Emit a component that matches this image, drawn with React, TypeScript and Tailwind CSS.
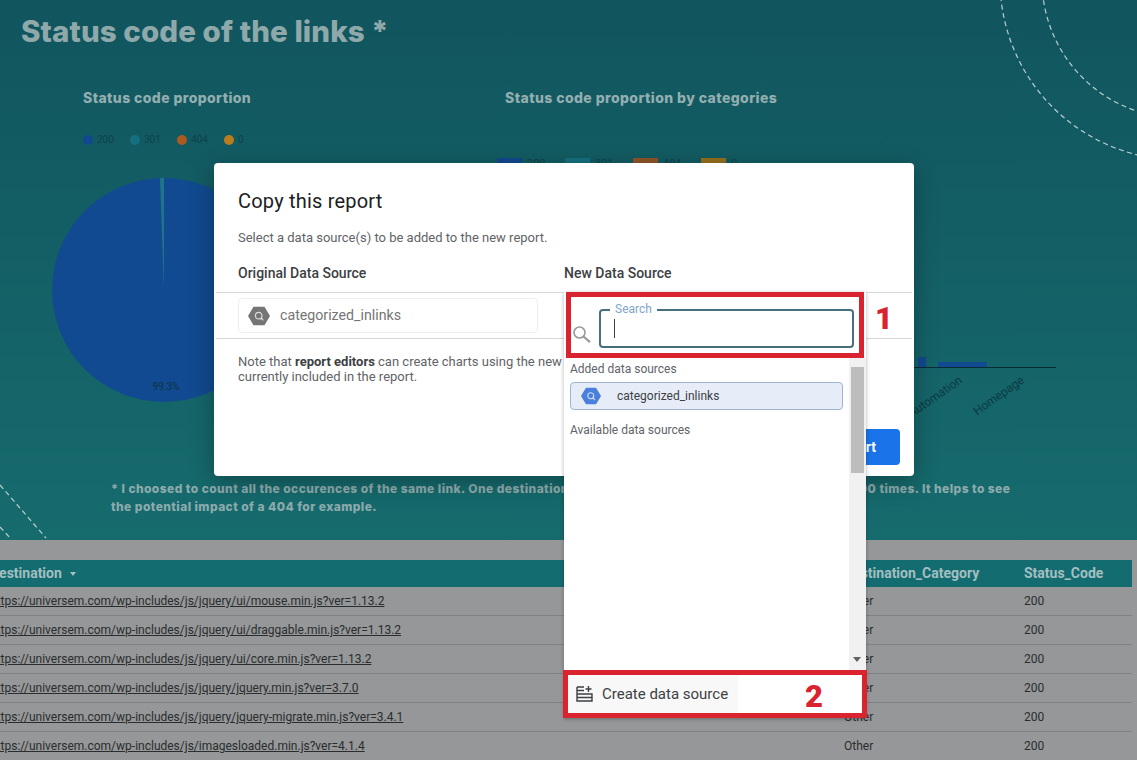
const rows = [
  "https://universem.com/wp-includes/js/jquery/ui/mouse.min.js?ver=1.13.2",
  "https://universem.com/wp-includes/js/jquery/ui/draggable.min.js?ver=1.13.2",
  "https://universem.com/wp-includes/js/jquery/ui/core.min.js?ver=1.13.2",
  "https://universem.com/wp-includes/js/jquery/jquery.min.js?ver=3.7.0",
  "https://universem.com/wp-includes/js/jquery/jquery-migrate.min.js?ver=3.4.1",
  "https://universem.com/wp-includes/js/imagesloaded.min.js?ver=4.1.4",
];

const heading = "font-['Inter','Liberation_Sans',sans-serif] font-extrabold";

function BigQueryHex({ fill, className }: { fill: string; className: string }) {
  return (
    <svg viewBox="0 0 24 20" className={className}>
      <polygon points="6,0 18,0 24,10 18,20 6,20 0,10" fill={fill} />
      <circle cx="11.7" cy="9.7" r="3.6" fill="none" stroke="#fff" strokeOpacity="0.75" strokeWidth="1.3" />
      <path d="M14.2 12.2l2.6 2.6" stroke="#fff" strokeOpacity="0.75" strokeWidth="1.3" />
    </svg>
  );
}

function LegendDot({ color, label }: { color: string; label: string }) {
  return (
    <div className="flex w-[47px] items-center gap-[4px]">
      <span className={`h-[10px] w-[10px] rounded-full ${color}`} />
      <span className="text-[10px] leading-[12px] text-[#0f4249]">{label}</span>
    </div>
  );
}

function LegendBar({ color, label }: { color: string; label: string }) {
  return (
    <div className="flex w-[68px] items-center gap-[5px]">
      <span className={`h-[12px] w-[25px] ${color}`} />
      <span className="text-[11px] leading-[12px] text-[#0f4249]">{label}</span>
    </div>
  );
}

function Background() {
  return (
    <>
      <section className="relative h-[540px] overflow-hidden bg-gradient-to-b from-[#11555e] to-[#166b6d]">
        <svg className="absolute inset-0 h-[540px] w-[1137px]" viewBox="0 0 1137 540" fill="none">
          <g stroke="#b9cfd0" strokeWidth="1.2" strokeDasharray="5 3.5">
            <circle cx="1180" cy="-20" r="180" />
            <circle cx="1180" cy="-20" r="138" />
            <path d="M0 485L46 538" />
            <path d="M0 527L11 539" />
          </g>
        </svg>
        <div className="relative">
          <h1 className={`pl-[21px] pt-[13px] text-[29.5px] leading-[36px] tracking-[0.1px] text-[#8fa9ab] ${heading}`}>
            Status code of the links *
          </h1>
          <div className="mt-[40px] flex h-[391px]">
            <div className="ml-[83px] w-[422px]">
              <h3 className={`text-[14px] leading-[18px] tracking-[0.4px] text-[#93aeb0] ${heading}`}>
                Status code proportion
              </h3>
              <div className="mt-[27px] flex h-[12px]">
                <LegendDot color="bg-[#12488f]" label="200" />
                <LegendDot color="bg-[#14707f]" label="301" />
                <LegendDot color="bg-[#ac5a22]" label="404" />
                <LegendDot color="bg-[#bb7c1d]" label="0" />
              </div>
              <svg className="-ml-[31px] mt-[32px]" width="224" height="224" viewBox="0 0 224 224">
                <circle cx="112" cy="112" r="112" fill="#114a90" />
                <path d="M112 112L108 0L112 0Z" fill="#1f7488" />
                <text x="114" y="212" textAnchor="middle" fontSize="10" fill="#0f3440">
                  99.3%
                </text>
              </svg>
            </div>
            <div className="w-[551px]">
              <h3 className={`text-[14px] leading-[18px] tracking-[0.42px] text-[#93aeb0] ${heading}`}>
                Status code proportion by categories
              </h3>
              <div className="ml-[-8px] mt-[51px] flex h-[12px]">
                <LegendBar color="bg-[#12488f]" label="200" />
                <LegendBar color="bg-[#14707f]" label="301" />
                <LegendBar color="bg-[#8f5426]" label="404" />
                <LegendBar color="bg-[#94701f]" label="0" />
              </div>
              <svg className="mt-[180px]" width="551" height="80" viewBox="0 0 551 80">
                <rect x="413" y="7" width="8" height="10" fill="#114a90" />
                <rect x="433" y="12" width="49" height="5" fill="#114a90" />
                <path d="M385 17.5H551" stroke="#0a2d33" strokeWidth="1" />
                <g fontSize="12" fill="#0b3b43" fontFamily="Roboto, sans-serif">
                  <text transform="translate(458 32) rotate(-35)" textAnchor="end">Automation</text>
                  <text transform="translate(520 32) rotate(-35)" textAnchor="end">Homepage</text>
                </g>
              </svg>
            </div>
          </div>
          <p className={`whitespace-nowrap pl-[111px] text-[12px] leading-[18px] tracking-[0.43px] text-[#8dabad] ${heading}`}>
            * I choosed to count all the occurences of the same link. One destination can be linked from 10 different pages up to 1000 times. It helps to see
            <br />
            the potential impact of a 404 for example.
          </p>
        </div>
      </section>
      <section className="h-[220px] overflow-hidden bg-[#959799] pr-[5px] pt-[20px] text-[12px] text-[#2a2d2e]">
        <div className="flex h-[27px] items-center bg-[#136c70] text-[14px] font-bold text-[#a3bfc0]">
          <div className="-ml-[10px] flex w-[854px] items-center gap-[8px]">
            <span>Destination</span>
            <span className="mt-[1px] border-x-[3px] border-t-[4px] border-x-transparent border-t-[#a3bfc0]" />
          </div>
          <div className="w-[180px]">Destination_Category</div>
          <div>Status_Code</div>
        </div>
        {rows.map((url) => (
          <div key={url} className="flex h-[29px] items-center border-b border-[#7f8284]">
            <a className="-ml-[10px] w-[854px] underline">{url}</a>
            <div className="w-[180px]">Other</div>
            <div>200</div>
          </div>
        ))}
      </section>
    </>
  );
}

function CreateIcon() {
  return (
    <svg width="17" height="16" viewBox="0 0 17 16" fill="none" stroke="#3c4043" strokeWidth="1.4">
      <path d="M1 1V15H16V8H1M1 11.5H16M1 1H8M1 4.5H8M12.5 0V6M9.5 3H15.5" />
    </svg>
  );
}

function SearchGlyph() {
  return (
    <svg width="18" height="17" viewBox="0 0 18 17" fill="none" stroke="#9a9a9a" className="shrink-0">
      <circle cx="6.5" cy="6.5" r="5.5" strokeWidth="1.6" />
      <path d="M10.5 10.5L17 16.2" strokeWidth="2.2" />
    </svg>
  );
}

function SourceDropdown() {
  return (
    <div className="absolute left-[350px] top-[129px] flex h-[426px] w-[302px] flex-col bg-white shadow-[0_1px_4px_rgba(0,0,0,0.3)]">
      <div className="relative z-10 mx-[2px] flex h-[66px] shrink-0 items-end border-[5px] border-[#d9232e] bg-white pb-[5px] pl-[2px] pr-[5px]">
        <div className="mb-[5px]">
          <SearchGlyph />
        </div>
        <div className="relative ml-[8px] flex h-[39px] flex-1 items-center rounded-[4px] border-2 border-[#47707f] pl-[13px]">
          <span className="absolute -top-[9px] left-[9px] bg-white px-[5px] text-[12px] leading-[14px] text-[#7ea6c8]">
            Search
          </span>
          <span className="h-[19px] w-px bg-[#3c4043]" />
        </div>
      </div>
      <div className="flex min-h-0 flex-1">
        <div className="flex-1 pl-[6px] pr-[5px] pt-[4px] text-[12px] leading-[15px] text-[#5f6368]">
          <p>Added data sources</p>
          <div className="mt-[5px] flex h-[28px] w-[273px] items-center rounded-[4px] border border-[#9db5d0] bg-[#e6edf8] pl-[10px]">
            <BigQueryHex fill="#4a7fdc" className="h-[18px] w-[20px]" />
            <span className="ml-[16px] text-[#3c4043]">categorized_inlinks</span>
          </div>
          <p className="mt-[13px]">Available data sources</p>
        </div>
        <div className="flex w-[17px] flex-col bg-[#f1f1f1] px-[2px]">
          <span className="mt-[9px] h-[106px] shrink-0 bg-[#bdbdbd]" />
          <span className="ml-[2px] mt-auto mb-[8px] w-0 border-x-[4px] border-t-[5px] border-x-transparent border-t-[#5f6368]" />
        </div>
      </div>
      <div className="relative -mx-[1px] flex h-[48px] shrink-0 items-center border-[5px] border-[#d9232e] bg-white">
        <div className="flex h-[38px] w-[170px] items-center gap-[9px] bg-[#f8f8f8] pl-[8px] text-[15px] text-[#3c4043]">
          <CreateIcon />
          Create data source
        </div>
      </div>
    </div>
  );
}

function CopyDialog() {
  return (
    <div className="absolute left-[214px] top-[163px] h-[313px] w-[700px] rounded-[4px] bg-white shadow-[0_6px_24px_rgba(0,0,0,0.3)]">
      <div className="px-[24px] pt-[24px]">
        <h2 className="text-[20px] font-normal leading-[28px] tracking-[0.2px] text-[#202124]">Copy this report</h2>
        <p className="mt-[15px] text-[13px] leading-[16px] text-[#5f6368]">
          Select a data source(s) to be added to the new report.
        </p>
        <div className="mt-[18px] flex text-[14px] font-medium leading-[18px] text-[#3c4043]">
          <span className="w-[326px]">Original Data Source</span>
          <span>New Data Source</span>
        </div>
      </div>
      <div className="mx-[2px] mt-[10px] border-y border-[#d5d7d9] py-[5px] pl-[22px]">
        <div className="flex h-[35px] w-[300px] items-center rounded-[4px] border border-[#eeeeee] pl-[9px]">
          <BigQueryHex fill="#757575" className="h-[20px] w-[22px]" />
          <span className="ml-[10px] text-[14.2px] text-[#757575]">categorized_inlinks</span>
        </div>
      </div>
      <p className="whitespace-nowrap px-[24px] pt-[15px] text-[13px] leading-[15px] text-[#5f6368]">
        Note that <b className="font-bold text-[#3c4043]">report editors</b> can create charts using the new data source(s) in this report, even those not
        <br />
        currently included in the report.
      </p>
      <div className="mr-[14px] mt-[45px] flex justify-end">
        <button className="h-[36px] rounded-[4px] bg-[#1a73e8] px-[24px] text-[14px] font-bold text-white">
          Copy Report
        </button>
      </div>
      <SourceDropdown />
    </div>
  );
}

export default function App() {
  return (
    <div className="relative h-[760px] w-[1137px] overflow-hidden font-['Roboto',sans-serif]">
      <Background />
      <CopyDialog />
      <span className="absolute left-[875px] top-[300px] text-[31px] font-black leading-[38px] text-[#d9232e]">1</span>
      <span className="absolute left-[805px] top-[678px] text-[31px] font-black leading-[38px] text-[#d9232e]">2</span>
    </div>
  );
}
